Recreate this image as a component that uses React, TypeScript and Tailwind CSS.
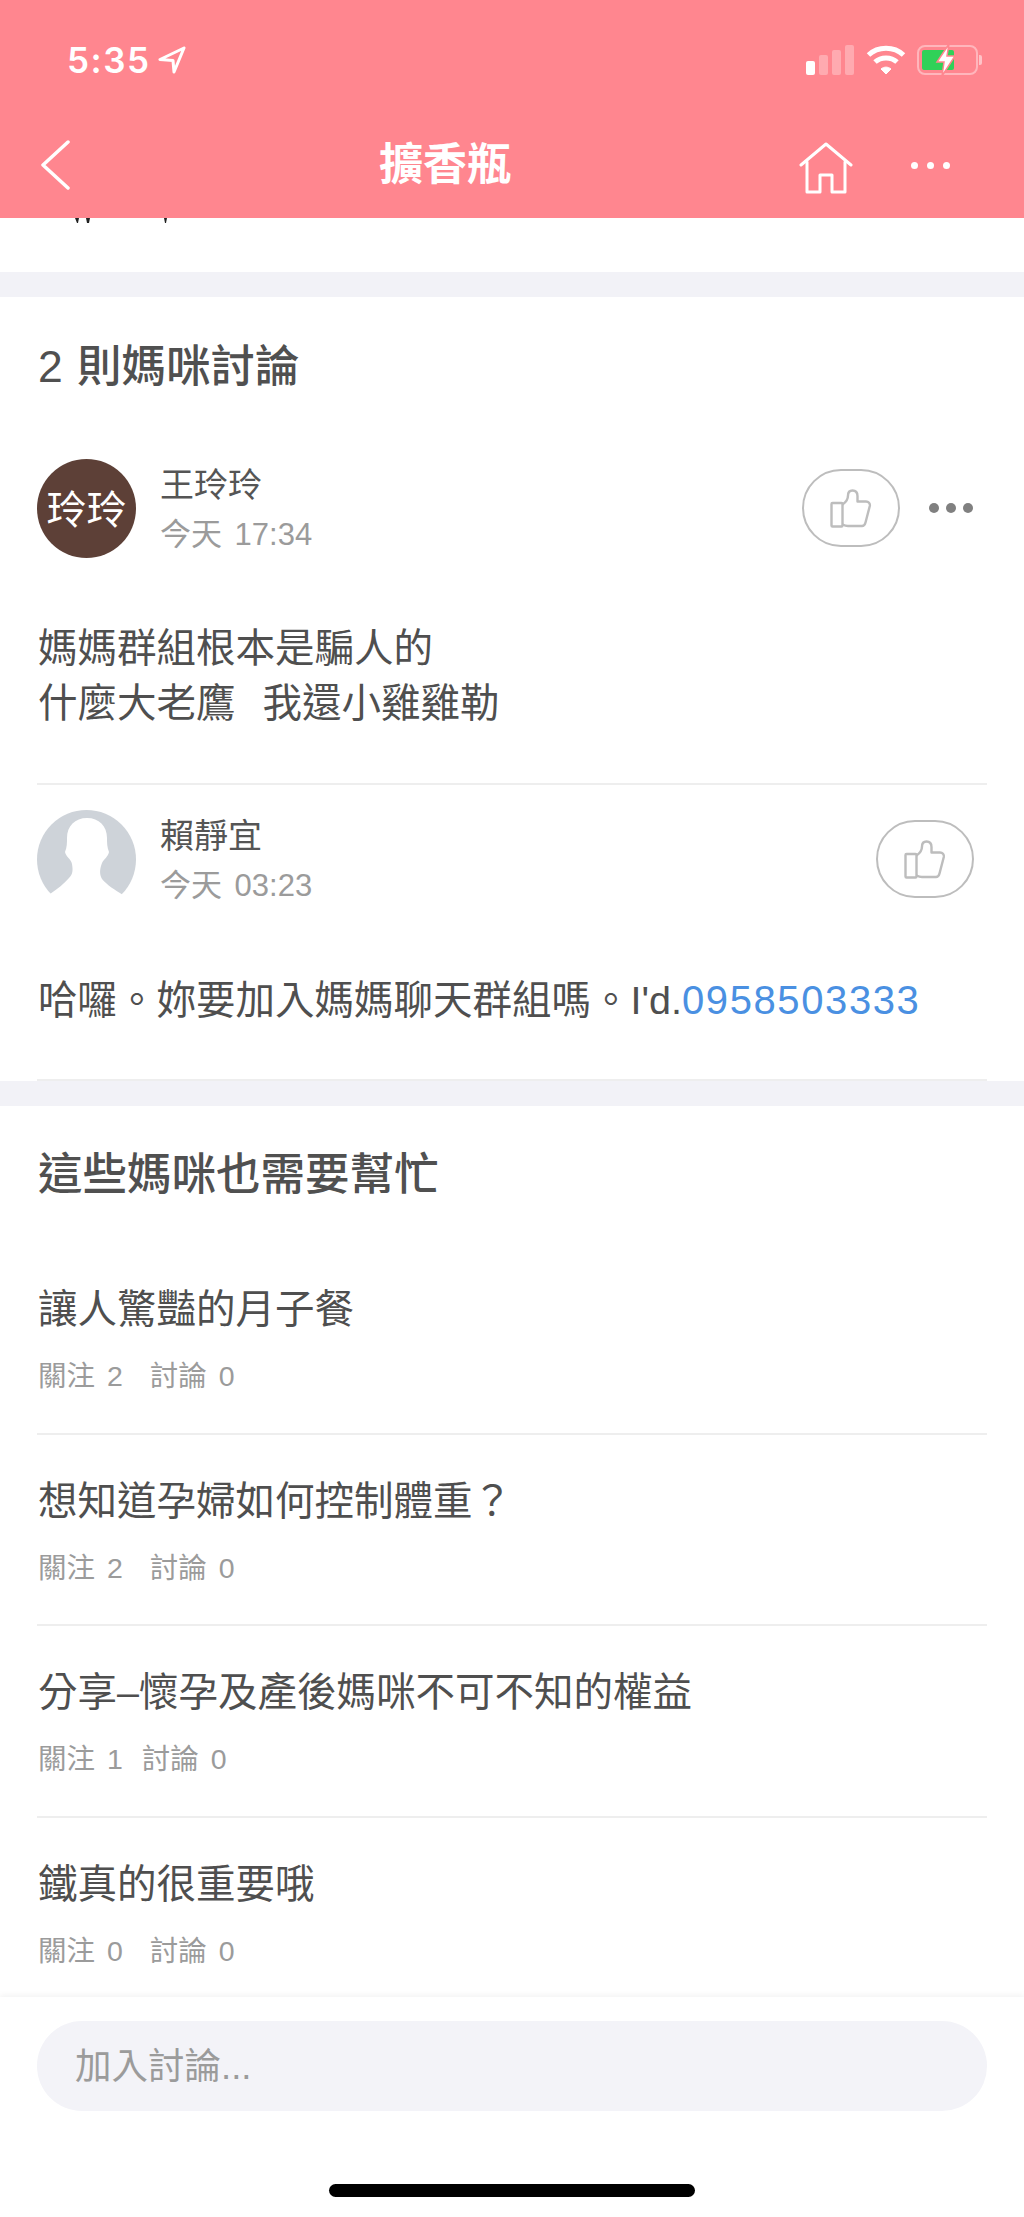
import React from 'react';

const Thumb: React.FC = () => (
  <svg width="42" height="39" viewBox="0 0 42 39" fill="none" stroke="#bdbdbd" strokeWidth="2.4" strokeLinejoin="round">
    <rect x="1.5" y="14" width="11" height="23.5" rx="1" />
    <path d="M12.5 35.5C14.5 36.5 16 37 18 37H32C34 37 35 35.5 35.5 33.5L39.8 17C40.3 14.500 38.500 12.500 36 12.500H27.500V7C27.500 3.500 25.500 1.500 22.500 1.500C19.500 1.500 18 3.500 18 6.500C18 10 15.500 13.500 12.500 15.500" />
  </svg>
);

const LikeButton: React.FC = () => (
  <div className="flex h-[78px] w-[98px] items-center justify-center rounded-[39px] border-2 border-[#bdbdbd]">
    <Thumb />
  </div>
);

const PersonAvatar: React.FC = () => (
  <svg width="99" height="99" viewBox="0 0 99 99" className="shrink-0">
    <circle cx="49.5" cy="49.5" r="49.5" fill="#ced3d9" />
    <path
      fill="#fff"
      d="M50 8C38 8 30 16 30 28C30 33 30 37 28 42C29 47 34 49 35 54C36 60 36 64 32 68C27 74 20 79 13 84L14 99H85L86 85C78 80 70 75 65 69C62 64 63 58 65 53C67 49 71 47 72 42C70 37 70 33 70 28C70 16 62 8 50 8Z"
    />
  </svg>
);

const Comment: React.FC<{
  avatar: React.ReactNode;
  name: string;
  time: string;
  actions: React.ReactNode;
  top: string;
  children: React.ReactNode;
}> = ({ avatar, name, time, actions, top, children }) => (
  <div className={top}>
    <div className="flex">
      {avatar}
      <div className="ml-[24px] flex flex-col">
        <div className="mt-[1px] text-[34px] leading-[50px] text-[#555]">{name}</div>
        <div className="text-[31px] leading-[50px] text-[#9b9b9b] [word-spacing:4px]">{time}</div>
      </div>
      <div className="ml-auto mt-[10px] flex h-[78px] items-center">{actions}</div>
    </div>
    {children}
  </div>
);

const topics = [
  { title: '讓人驚豔的月子餐', follow: 2, talk: 0, gap: 'gap-[27px]' },
  { title: '想知道孕婦如何控制體重？', follow: 2, talk: 0, gap: 'gap-[27px]' },
  { title: '分享–懷孕及產後媽咪不可不知的權益', follow: 1, talk: 0, gap: 'gap-[19px]' },
  { title: '鐵真的很重要哦', follow: 0, talk: 0, gap: 'gap-[27px]' },
];

const App: React.FC = () => {
  return (
    <div className="flex h-[2217px] w-[1024px] flex-col overflow-hidden bg-white [font-family:'Liberation_Sans','Noto_Sans_CJK_TC',sans-serif]">
      {/* top bar */}
      <header className="relative z-10 h-[218px] shrink-0 bg-[#ff868f] text-white">
        <div className="flex h-[120px] items-center pl-[67px] pr-[42px]">
          <span className="text-[35px] font-semibold leading-none [font-family:Inter,sans-serif] tracking-[1.5px]">5:35</span>
          <svg width="28" height="28" viewBox="0 0 28 28" className="ml-[8px]" fill="none" stroke="#fff" strokeWidth="3" strokeLinejoin="round">
            <path d="M26 2L2 13.500L15 14.500L16 26Z" />
          </svg>
          <div className="ml-auto flex h-[30px] items-end gap-[4px]">
            <div className="h-[14px] w-[9px] rounded-[2px] bg-white" />
            <div className="h-[20px] w-[9px] rounded-[2px] bg-white/30" />
            <div className="h-[25px] w-[9px] rounded-[2px] bg-white/30" />
            <div className="h-[30px] w-[9px] rounded-[2px] bg-white/30" />
          </div>
          <svg width="40" height="30" viewBox="0 0 40 30" className="ml-[12px]" fill="none" stroke="#fff" strokeWidth="5">
            <path d="M2.500 10C12 1 28 1 37.500 10" />
            <path d="M9 17C15 11.500 25 11.500 31 17" />
            <path d="M15 24C18 21.500 22 21.500 25 24L20 29Z" fill="#fff" strokeWidth="1" />
          </svg>
          <div className="relative ml-[11px] h-[30px] w-[61px] rounded-[8px] border-2 border-white/40">
            <div className="absolute left-[3px] top-[3px] h-[20px] w-[32px] rounded-[2px] bg-[#30d158]" />
            <svg width="22" height="34" viewBox="0 0 22 34" className="absolute left-[16px] top-[-4px]">
              <path d="M14 1L2 19H9L7 33L20 13H12Z" fill="#fff" stroke="#ff868f" strokeWidth="1.500" />
            </svg>
          </div>
          <div className="ml-[1px] h-[10px] w-[3px] rounded-r-[2px] bg-white/50" />
        </div>
        <div className="flex h-[98px] items-center pb-[8px]">
          <svg width="30" height="50" viewBox="0 0 30 50" className="ml-[41px]" fill="none" stroke="#fff" strokeWidth="3.500" strokeLinecap="round" strokeLinejoin="round">
            <path d="M27 2L2 25L27 48" />
          </svg>
          <div className="ml-[308px] text-[44px] font-bold leading-none">擴香瓶</div>
          <svg width="54" height="52" viewBox="0 0 54 52" className="ml-[288px] mt-[6px]" fill="none" stroke="#fff" strokeWidth="3" strokeLinejoin="round" strokeLinecap="round">
            <path d="M2 23L27 2L52 23" />
            <path d="M8 20V50H21V33H33V50H46V20" />
          </svg>
          <div className="ml-[58px] flex gap-[9px]">
            <div className="h-[7px] w-[7px] rounded-full bg-white" />
            <div className="h-[7px] w-[7px] rounded-full bg-white" />
            <div className="h-[7px] w-[7px] rounded-full bg-white" />
          </div>
        </div>
      </header>

      <main className="min-h-0 flex-1 overflow-hidden">
        {/* bottom of the text scrolled under the bar */}
        <div className="h-[54px] bg-white">
          <svg width="180" height="6" viewBox="0 0 180 6" className="block">
            <path d="M75 0h4l-1 5h-1zM86 0h4l-1 5h-2zM164 0h3l-1 5h-1z" fill="#222" />
          </svg>
        </div>
        <div className="h-[25px] bg-[#f2f2f7]" />

        <section className="px-[37px]">
          <h2 className="pl-[1px] pt-[40px] text-[44.5px] font-medium leading-[60px] text-[#505050] [word-spacing:2px]">2 則媽咪討論</h2>
          <Comment
            top="mt-[62px]"
            name="王玲玲"
            time="今天 17:34"
            avatar={
              <div className="flex h-[99px] w-[99px] shrink-0 items-center justify-center rounded-full bg-[#5d4037] pt-[2px] text-[40px] text-white">
                玲玲
              </div>
            }
            actions={
              <>
                <LikeButton />
                <div className="ml-[29px] mr-[14px] flex gap-[7px]">
                  <div className="h-[10px] w-[10px] rounded-full bg-[#808080]" />
                  <div className="h-[10px] w-[10px] rounded-full bg-[#808080]" />
                  <div className="h-[10px] w-[10px] rounded-full bg-[#808080]" />
                </div>
              </>
            }
          >
            <p className="mt-[61px] pl-[1px] text-[39.5px] leading-[55px] text-[#4f4f4f]">
              媽媽群組根本是騙人的
              <br />
              什麼大老鷹<span className="ml-[27px]">我還小雞雞勒</span>
            </p>
          </Comment>
          <div className="mt-[52px] h-[2px] bg-[#eeeeee]" />
          <Comment
            top="mt-[25px]"
            name="賴靜宜"
            time="今天 03:23"
            avatar={<PersonAvatar />}
            actions={
              <div className="mr-[13px]">
                <LikeButton />
              </div>
            }
          >
            <p className="mt-[61px] whitespace-nowrap pl-[1px] text-[39.5px] leading-[57px] text-[#4f4f4f]">
              哈囉。妳要加入媽媽聊天群組嗎。I'd.<span className="text-[40px] tracking-[1.6px] text-[#4a90e2]">0958503333</span>
            </p>
          </Comment>
          <div className="mt-[50px] h-[2px] bg-[#eeeeee]" />
        </section>
        <div className="h-[25px] bg-[#f2f2f7]" />

        <section className="px-[37px]">
          <h2 className="pl-[1px] pt-[39px] text-[44.5px] font-medium leading-[60px] text-[#505050]">這些媽咪也需要幫忙</h2>
          <div className="mt-[38px]">
            {topics.map((t) => (
              <div key={t.title} className="h-[191.5px] border-b-2 border-[#eeeeee] pt-[41px]">
                <div className="pl-[1px] text-[39.5px] leading-[50px] text-[#4f4f4f]">{t.title}</div>
                <div className={`mt-[22px] flex ${t.gap} pl-[1px] text-[28.5px] leading-[40px] text-[#9b9b9b] [word-spacing:4px]`}>
                  <span>關注 {t.follow}</span>
                  <span>討論 {t.talk}</span>
                </div>
              </div>
            ))}
          </div>
        </section>
      </main>

      {/* comment input */}
      <footer className="relative z-10 h-[220px] shrink-0 bg-white px-[37px] pt-[24px] shadow-[0_-2px_6px_rgba(0,0,0,0.05)]">
        <div className="flex h-[90px] items-center rounded-full bg-[#f3f3f8] pl-[38px] pt-[3px] text-[36.5px] text-[#9b9b9b]">
          加入討論...
        </div>
        <div className="mx-auto mt-[73px] h-[13px] w-[366px] rounded-full bg-black" />
      </footer>
    </div>
  );
};

export default App;
